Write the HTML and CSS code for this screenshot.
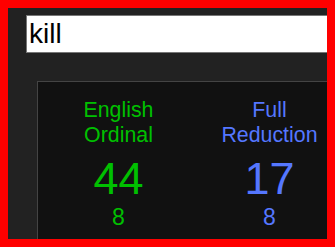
FILE: index.html
```html
<!DOCTYPE html>
<html lang="en">
<head>
    <meta charset="UTF-8">
    <meta name="viewport" content="width=device-width, initial-scale=1.0">
    <title>Gematria</title>
    <link rel="stylesheet" href="styles.css">
</head>
<body>
    <div class="frame">
        <div class="page">
            <input type="text" class="phrase-input" value="kill">

            <div class="results">
                <div class="cipher cipher-ordinal">
                    <div class="cipher-name">English<br>Ordinal</div>
                    <div class="cipher-value">44</div>
                    <div class="cipher-reduced">8</div>
                </div>
                <div class="cipher cipher-reduction">
                    <div class="cipher-name">Full<br>Reduction</div>
                    <div class="cipher-value">17</div>
                    <div class="cipher-reduced">8</div>
                </div>
            </div>
        </div>
    </div>
</body>
</html>
```

FILE: styles.css
```css
body {
    margin: 0;
    font-family: 'Liberation Sans', Arial, sans-serif;
}

.frame {
    height: 247px;
    box-sizing: border-box;
    border: 8px solid #ff0000;
    background: #222222;
    overflow: hidden;
}

.page {
    width: 420px;
    padding: 7px 0 0 18px;
}

.phrase-input {
    display: block;
    width: 380px;
    height: 38px;
    box-sizing: border-box;
    padding: 1px 2px;
    border: 1px solid #767676;
    background: white;
    color: black;
    font-family: 'Liberation Sans', Arial, sans-serif;
    font-size: 28px;
    outline: none;
}

.results {
    display: flex;
    margin: 28px 0 0 11px;
    padding: 16px 0 20px 5px;
    background: #111111;
    border: 1px solid #444444;
}

.cipher {
    width: 151px;
    text-align: center;
}

.cipher-ordinal {
    color: #00c000;
}

.cipher-reduction {
    color: #5577ff;
}

.cipher-name {
    font-size: 21.33px;
    line-height: 25px;
}

.cipher-value {
    margin-top: 6px;
    font-size: 45px;
    line-height: 50px;
}

.cipher-reduced {
    font-size: 23px;
    line-height: 27px;
}
```
